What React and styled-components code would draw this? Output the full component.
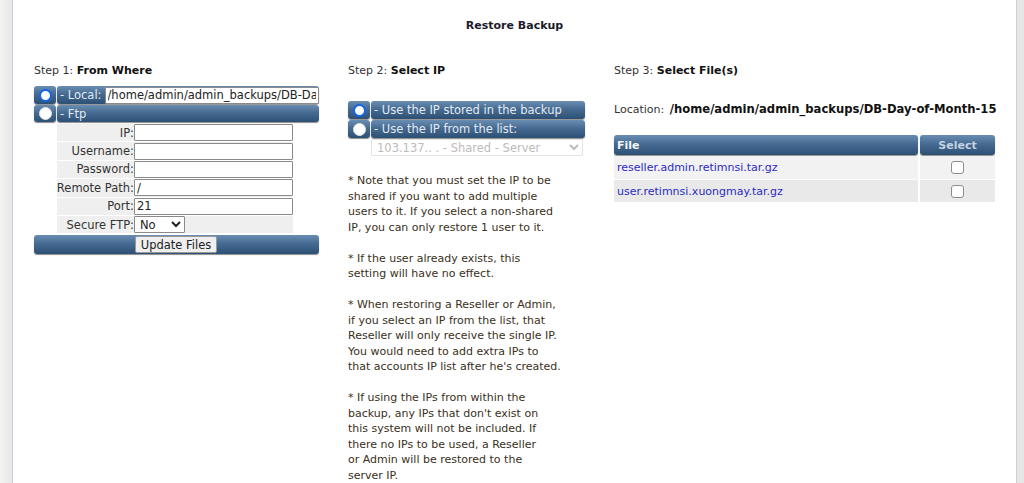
import React from "react";
import styled, { createGlobalStyle, css } from "styled-components";

const GlobalStyle = createGlobalStyle`
  html, body {
    margin: 0;
    padding: 0;
    background: linear-gradient(to right, #f3f3f3, #e6e6e6 12px, #e6e6e6);
    font-family: "DejaVu Sans", Verdana, sans-serif;
    font-size: 11px;
    color: #333;
  }
`;

const bar = css`
  background: linear-gradient(to bottom, #6a8db2 0%, #466b92 45%, #2d4f74 100%);
  border-radius: 3px;
  box-shadow: 0 1px 1px rgba(0, 0, 0, 0.45);
`;

const Page = styled.div`
  margin: 0 7px 0 12px;
  min-height: 483px;
  background: #fff;
  border-left: 1px solid #c6d1dd;
  border-right: 1px solid #c6d1dd;
  box-sizing: border-box;
`;

const Title = styled.div`
  text-align: center;
  font-weight: bold;
  color: #1b1b2b;
  padding: 19px 0 0 0;
  height: 64px;
  box-sizing: border-box;
`;

const Columns = styled.div`
  display: grid;
  grid-template-columns: 285px 237px 383px;
  column-gap: 29px;
  padding-left: 21px;
`;

const Column = styled.div`
  display: flex;
  flex-direction: column;
`;

const StepTitle = styled.div`
  height: 14px;
  line-height: 14px;
  color: #333;
  margin-bottom: ${(p) => p.$gap}px;

  b {
    color: #111;
  }
`;

const BarRow = styled.div`
  display: flex;
  gap: 1px;
  height: ${(p) => p.$h || 18}px;
  margin-bottom: 1px;
`;

const RadioCell = styled.div`
  ${bar};
  width: 22px;
  display: flex;
  align-items: center;
  justify-content: center;
`;

const BarLabel = styled.div`
  ${bar};
  flex: 1;
  display: flex;
  align-items: center;
  gap: 3px;
  padding-left: 3px;
  color: #e3eaf2;
  font-size: 11.5px;
  white-space: nowrap;
`;

const Radio = styled.input.attrs({ type: "radio" })`
  appearance: none;
  margin: 0;
  width: 13px;
  height: 13px;
  border-radius: 50%;
  background: #fff;
  border: 1px solid #e4e4e4;
  box-sizing: border-box;

  &:checked {
    border: 2px solid #1565e6;
    box-shadow: inset 0 0 0 1px #fff, inset 0 0 0 5px #fff;
  }
`;

const TextInput = styled.input`
  box-sizing: border-box;
  height: ${(p) => p.$h || 17}px;
  width: ${(p) => p.$w}px;
  margin: 0;
  padding: 0 2px;
  border: 1px solid #8a8a8a;
  border-radius: 1px;
  background: #fff;
  font-family: "DejaVu Sans", Verdana, sans-serif;
  font-size: 11.5px;
  color: #222;
`;

const FormTable = styled.div`
  display: grid;
  grid-template-columns: 77px 159px;
  row-gap: 1px;
  margin: 1px 0 1px 23px;
  width: 236px;
`;

const FormLabel = styled.div`
  background: #efefef;
  height: 17.4px;
  display: flex;
  align-items: center;
  justify-content: flex-end;
  color: #333;
  font-size: 11.5px;
  white-space: nowrap;
`;

const FormValue = styled.div`
  background: #efefef;
  height: 17.4px;
  display: flex;
  align-items: center;
`;

const SmallSelect = styled.select`
  height: 17px;
  width: 51px;
  margin: 0;
  padding: 0 1px;
  border: 1px solid #8a8a8a;
  border-radius: 1px;
  background: #fff;
  font-family: "DejaVu Sans", Verdana, sans-serif;
  font-size: 11.5px;
  color: #222;
`;

const ActionBar = styled.div`
  ${bar};
  height: 19px;
  display: flex;
  align-items: center;
  justify-content: center;
  margin-top: 1px;
`;

const Button = styled.button`
  height: 17px;
  width: 82px;
  padding: 0;
  margin-right: 1px;
  background: #efefef;
  border: 1px solid #9a9a9a;
  border-radius: 2px;
  font-family: "DejaVu Sans", Verdana, sans-serif;
  font-size: 11.5px;
  color: #222;
`;

const IpSelect = styled.select`
  margin: 0 0 0 23px;
  width: 212px;
  height: 17px;
  padding: 0 1px;
  border: 1px solid #dadada;
  border-radius: 1px;
  background: #fff;
  color: #a0a0a0;
  font-family: "DejaVu Sans", Verdana, sans-serif;
  font-size: 11.5px;
`;

const Notes = styled.div`
  margin-top: 17px;
  line-height: 15.5px;
  color: #3a3020;
`;

const Para = styled.div`
  margin-bottom: 15.5px;
`;

const Line = styled.div`
  white-space: nowrap;
`;

const Location = styled.div`
  margin: 24px 0 19px;
  height: 14px;
  line-height: 14px;
  color: #333;
  white-space: nowrap;

  b {
    color: #111;
    margin-left: 2px;
    font-size: 11.6px;
  }
`;

const FileTable = styled.div`
  display: grid;
  grid-template-columns: 304px 75px;
  column-gap: 2px;
  row-gap: 1px;
  width: 381px;
`;

const HeadCell = styled.div`
  ${bar};
  height: 20px;
  display: flex;
  align-items: center;
  justify-content: ${(p) => (p.$center ? "center" : "flex-start")};
  padding-left: ${(p) => (p.$center ? 0 : 3)}px;
  font-weight: bold;
  color: ${(p) => (p.$center ? "#c4d2e1" : "#f4f7fa")};
`;

const Cell = styled.div`
  height: ${(p) => p.$h}px;
  background: ${(p) => (p.$alt ? "#e9e9e9" : "#f2f2f2")};
  display: flex;
  align-items: center;
  justify-content: ${(p) => (p.$center ? "center" : "flex-start")};
  padding-left: ${(p) => (p.$center ? 0 : 3)}px;
`;

const FileLink = styled.a`
  color: #2b2bc4;
  text-decoration: none;
`;

const Check = styled.input.attrs({ type: "checkbox" })`
  appearance: none;
  width: 13px;
  height: 13px;
  margin: 0;
  border: 1px solid #8d8d8d;
  border-radius: 3px;
  background: #fff;
`;

const ftpFields = [
  { label: "IP:", value: "" },
  { label: "Username:", value: "" },
  { label: "Password:", value: "" },
  { label: "Remote Path:", value: "/" },
  { label: "Port:", value: "21" },
];

const notes = [
  [
    "* Note that you must set the IP to be",
    "shared if you want to add multiple",
    "users to it. If you select a non-shared",
    "IP, you can only restore 1 user to it.",
  ],
  ["* If the user already exists, this", "setting will have no effect."],
  [
    "* When restoring a Reseller or Admin,",
    "if you select an IP from the list, that",
    "Reseller will only receive the single IP.",
    "You would need to add extra IPs to",
    "that accounts IP list after he's created.",
  ],
  [
    "* If using the IPs from within the",
    "backup, any IPs that don't exist on",
    "this system will not be included. If",
    "there no IPs to be used, a Reseller",
    "or Admin will be restored to the",
    "server IP.",
  ],
];

const files = ["reseller.admin.retimnsi.tar.gz", "user.retimnsi.xuongmay.tar.gz"];

const App = () => {
  return (
    <>
      <GlobalStyle />
      <Page>
        <Title>Restore Backup</Title>
        <Columns>
          <Column>
            <StepTitle $gap={8}>
              Step 1: <b>From Where</b>
            </StepTitle>
            <BarRow>
              <RadioCell>
                <Radio name="where" defaultChecked />
              </RadioCell>
              <BarLabel>
                - Local:
                <TextInput
                  $w={214}
                  defaultValue="/home/admin/admin_backups/DB-Day-of-Month-15"
                />
              </BarLabel>
            </BarRow>
            <BarRow $h={17}>
              <RadioCell>
                <Radio name="where" />
              </RadioCell>
              <BarLabel>- Ftp</BarLabel>
            </BarRow>
            <FormTable>
              {ftpFields.map((f) => (
                <React.Fragment key={f.label}>
                  <FormLabel>{f.label}</FormLabel>
                  <FormValue>
                    <TextInput $w={159} defaultValue={f.value} />
                  </FormValue>
                </React.Fragment>
              ))}
              <FormLabel>Secure FTP:</FormLabel>
              <FormValue>
                <SmallSelect defaultValue="no">
                  <option value="no">No</option>
                  <option value="yes">Yes</option>
                </SmallSelect>
              </FormValue>
            </FormTable>
            <ActionBar>
              <Button>Update Files</Button>
            </ActionBar>
          </Column>

          <Column>
            <StepTitle $gap={23}>
              Step 2: <b>Select IP</b>
            </StepTitle>
            <BarRow>
              <RadioCell>
                <Radio name="ip" defaultChecked />
              </RadioCell>
              <BarLabel>- Use the IP stored in the backup</BarLabel>
            </BarRow>
            <BarRow>
              <RadioCell>
                <Radio name="ip" />
              </RadioCell>
              <BarLabel>- Use the IP from the list:</BarLabel>
            </BarRow>
            <IpSelect disabled>
              <option>103.137..               . - Shared - Server</option>
            </IpSelect>
            <Notes>
              {notes.map((p, i) => (
                <Para key={i}>
                  {p.map((l) => (
                    <Line key={l}>{l}</Line>
                  ))}
                </Para>
              ))}
            </Notes>
          </Column>

          <Column>
            <StepTitle $gap={0}>
              Step 3: <b>Select File(s)</b>
            </StepTitle>
            <Location>
              Location: <b>/home/admin/admin_backups/DB-Day-of-Month-15</b>
            </Location>
            <FileTable>
              <HeadCell>File</HeadCell>
              <HeadCell $center>Select</HeadCell>
              {files.map((f, i) => (
                <React.Fragment key={f}>
                  <Cell $h={i === 0 ? 23 : 22} $alt={i % 2 === 1}>
                    <FileLink href="#">{f}</FileLink>
                  </Cell>
                  <Cell $h={i === 0 ? 23 : 22} $alt={i % 2 === 1} $center>
                    <Check />
                  </Cell>
                </React.Fragment>
              ))}
            </FileTable>
          </Column>
        </Columns>
      </Page>
    </>
  );
};

export default App;
